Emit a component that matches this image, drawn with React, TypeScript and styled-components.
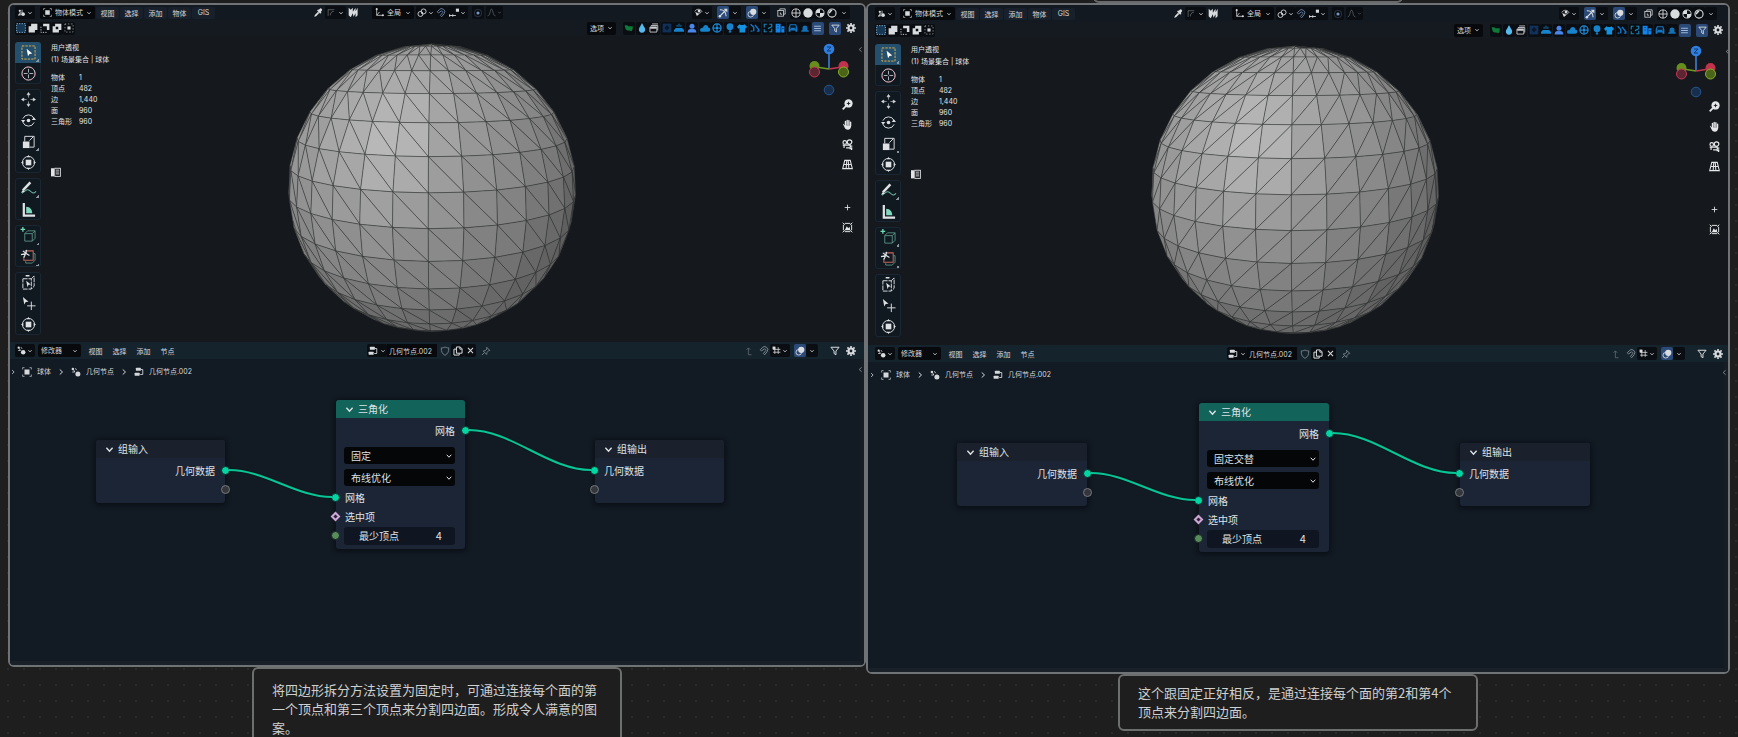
import React, { useMemo } from "react";
import styled, { createGlobalStyle, css } from "styled-components";

const GlobalStyle = createGlobalStyle`
  *, *::before, *::after { box-sizing: border-box; }
  html, body { margin: 0; background: #1e1e1e; }
  body, button, select, input {
    font-family: Inter, "Noto Sans CJK SC", sans-serif;
  }
  button, select, input {
    margin: 0; padding: 0; border: 0; background: none; color: inherit; font-size: inherit;
  }
  svg { display: block; flex: none; }
`;

/* ---------- icons (16 x 16 grid) ---------- */

const line = { fill: "none", stroke: "currentColor", strokeWidth: 1.4 } as const;

const glyphs: Record<string, React.ReactNode> = {
  chevron: <path d="M3.5 5.5 8 10.5l4.5-5" {...line} strokeWidth={2} />,
  next: <path d="M5.5 3 11 8l-5.500 5" {...line} strokeWidth={2} />,
  prev: <path d="M10.500 3 5 8l5.500 5" {...line} strokeWidth={2} />,
  editor3d: <><path d="M2 12h9M4 9h9M9 3v6M6 8l-3 6" {...line} /><circle cx="5" cy="5" r="2" fill="currentColor" /><circle cx="11" cy="11" r="3" fill="currentColor" /></>,
  object: <><rect x="4" y="4" width="8" height="8" fill="currentColor" /><path d="M1 4V1h3M12 1h3v3M15 12v3h-3M4 15H1v-3" {...line} opacity=".75" /></>,
  nodes: <><circle cx="11" cy="11" r="4" fill="currentColor" /><circle cx="3" cy="3" r="2" fill="currentColor" /><path d="M4 4l2 4M7 2l2 3M2 8h4" {...line} /></>,
  tree: <><rect x="3" y="1" width="8" height="5" rx="1" fill="currentColor" /><rect x="1" y="9" width="8" height="5" rx="1" fill="currentColor" /><path d="M11 4h3v8h-4" {...line} /></>,
  eyedropper: <><path d="M9 3l1.500-1.500a2 2 0 0 1 3.500 3L12.500 6l1 1-2 2-5-5 2-2z" fill="currentColor" /><path d="M8 6l-5 5-1 3 3-1 5-5" fill="currentColor" /></>,
  frame: <path d="M2 14V3h11M12 6c-4 0-6 3-6 7" {...line} opacity=".45" />,
  brandN: <path d="M1 1l3 3 3-3v6l4-6v5l3-5v11l-3 3V9l-3 5-1-5-3 6-3-3z" fill="currentColor" />,
  axes: <><path d="M3 1v12h12M3 13l5-6" {...line} /><circle cx="3" cy="2" r="1.800" fill="currentColor" /><circle cx="14" cy="13" r="1.800" fill="currentColor" /></>,
  pivot: <><circle cx="5.500" cy="9.500" r="4" {...line} /><circle cx="10.500" cy="5.500" r="4" {...line} /><circle cx="8" cy="8" r="1.300" fill="currentColor" /></>,
  magnet: <path d="M2 6l3-3a5 5 0 0 1 8 6l-4 5-2-2 4-5a2 2 0 0 0-3-2L4 8z" {...line} strokeWidth={1.600} />,
  snapInc: <><path d="M0 12h11M1 10v4M6 10v4" {...line} /><rect x="11" y="1" width="5" height="5" fill="currentColor" /></>,
  dot: <><circle cx="8" cy="8" r="2.500" fill="currentColor" /><circle cx="8" cy="8" r="6" {...line} opacity=".3" /></>,
  bell: <path d="M1 14c5 0 4-12 7-12s2 12 7 12" {...line} />,
  eye: <><path d="M1 6c4-5 10-5 13 0-3 4-6 4-8 3" {...line} /><circle cx="9" cy="5.500" r="2.500" fill="currentColor" /><path d="M2 6l7 5-4 3z" fill="currentColor" /></>,
  gizmo: <><path d="M2 14L13 3M3 3c6-1 10 4 10 10" {...line} strokeWidth={1.700} /><path d="M9 1h6v6z" fill="currentColor" /><circle cx="3" cy="13" r="2" fill="currentColor" /></>,
  overlay: <><circle cx="10" cy="6" r="5" fill="currentColor" /><circle cx="6" cy="10" r="4.500" {...line} /></>,
  xray: <><rect x="1.500" y="4.500" width="10" height="10" {...line} /><path d="M5 4V1.500h9.500V11H12M6 8v3h3" {...line} /></>,
  wire: <><circle cx="8" cy="8" r="6.500" {...line} /><path d="M8 1v14M1 8h14" {...line} /></>,
  solid: <circle cx="8" cy="8" r="7.500" fill="currentColor" />,
  material: <><circle cx="8" cy="8" r="6.500" {...line} /><path d="M8 8V1.500A6.500 6.500 0 0 0 1.500 8zM8 8h6.500A6.500 6.500 0 0 1 8 14.500z" fill="currentColor" /></>,
  rendered: <><circle cx="8" cy="8" r="6.500" {...line} strokeWidth={1.800} /><path d="M3 7a5 5 0 0 1 6-4L4 9z" fill="currentColor" /></>,
  leaf: <path d="M1 4c3 0 4-1 6 1h7v4l-2 4-4-1c-4 0-6-2-6-5z" fill="currentColor" />,
  drop: <path d="M8 0c2 5 5 7 5 10.500a5 5 0 0 1-10 0C3 7 6 5 8 0z" fill="currentColor" />,
  stack: <><path d="M1.500 6.500h11v8h-11zM3 4h11v8M5 1.500h9.500" {...line} /><path d="M2 6h10v3H2z" fill="currentColor" /></>,
  domain: <><rect x="1" y="1" width="14" height="14" fill="currentColor" opacity=".6" /><path d="M8 3l4 4-4 5-4-4z" fill="#0b1626" /></>,
  ocean: <><path d="M0 14v-3l3-3h10l3 3v3z" fill="currentColor" /><path d="M5 6V3M8 6V1M11 6V3" {...line} /></>,
  person: <><circle cx="8" cy="5" r="4" fill="currentColor" /><path d="M1 15c0-4 3-6 7-5 4-1 7 1 7 5z" fill="currentColor" /></>,
  cloud: <path d="M3 14a3 3 0 0 1 0-6l2-1c1-5 8-5 8 0a3.500 3.500 0 0 1 0 7z" fill="currentColor" />,
  reel: <><circle cx="8" cy="8" r="6.500" {...line} strokeWidth={2} /><path d="M8 2v4M8 10v4M2 8h4M10 8h4" {...line} strokeWidth={2} /><circle cx="8" cy="8" r="2" fill="currentColor" /></>,
  balloon: <><circle cx="8" cy="6" r="5.500" fill="currentColor" /><path d="M8 11v4M6 14h4" {...line} strokeWidth={2} /></>,
  shirt: <path d="M4 2l2 1h4l2-1 4 4-2 3-1-1v7H4V8L2 9 0 6z" fill="currentColor" />,
  bones: <path d="M1 2l5 5v6M8 3l7 9M1 13h3M11 13h4" {...line} strokeWidth={2.200} />,
  frameCut: <path d="M6 2H2v5M10 2h4v4l-6 3M2 10v4h4M14 9v5h-4" {...line} strokeWidth={1.800} />,
  building: <><path d="M1 1h8v14H1zM10 5h5v10h-5z" fill="currentColor" /><path d="M4 4h2M4 8h2M11 9h3" stroke="#0b1626" /></>,
  car: <><path d="M3 2h10l2 5v7h-3v-2H4v2H1V7z" fill="currentColor" /><path d="M4.500 4h7l1 3h-9zM3 9h2M11 9h2" fill="#0b1626" stroke="#0b1626" /></>,
  alarm: <path d="M2 14v-2l2-1V8a4 4 0 0 1 8 0v3l2 1v2z" fill="currentColor" />,
  list: <path d="M2 4h12M2 8h12M2 12h12" {...line} strokeWidth={1.700} />,
  filter: <path d="M1.500 2h13L9.500 8v6L6.500 12V8z" {...line} strokeWidth={1.600} />,
  gear: <><circle cx="8" cy="8" r="4" {...line} strokeWidth={3.500} /><path d="M8 0v3M8 13v3M0 8h3M13 8h3M2.300 2.300l2 2M11.700 11.700l2 2M13.700 2.300l-2 2M4.300 11.700l-2 2" {...line} strokeWidth={2.600} /></>,
  selBox: <><rect x="1" y="1" width="14" height="14" fill="#173854" /><rect x="1" y="1" width="14" height="14" {...line} stroke="#8fc4ec" strokeDasharray="2 2" /></>,
  selAdd: <path d="M5 1h10v10h-4v4H1V5h4z" fill="currentColor" />,
  selSub: <><path d="M5 1h10v10h-4V5H5z" fill="currentColor" /><path d="M1.500 6v9h9" {...line} strokeDasharray="2 2" /></>,
  selDiff: <><path d="M5 1h10v10h-4v4H1V5h4z" fill="currentColor" /><rect x="6" y="6" width="4" height="4" fill="#0a0d11" /></>,
  selAnd: <><rect x="1.500" y="1.500" width="13" height="13" {...line} strokeDasharray="2 3" opacity=".7" /><rect x="5.500" y="5.500" width="5" height="5" fill="currentColor" /></>,
  panel: <><rect x="0" y="2" width="5" height="13" fill="currentColor" /><rect x="6" y="2" width="9" height="13" {...line} /><path d="M8 5h5M8 8h5M8 11h5" {...line} /></>,
  shield: <path d="M8 1.500c2 1.500 4 1.500 6 1.500 0 6-1 9-6 12C3 12 2 9 2 3c2 0 4 0 6-1.500z" {...line} />,
  copy: <path d="M5.500 1.500h6l3 3v7h-9zM11 2v3h3M5 5H1.500v9.500H10V12" {...line} strokeWidth={1.600} />,
  close: <path d="M3.500 3.500l9 9M12.500 3.500l-9 9" {...line} strokeWidth={1.800} />,
  pin: <path d="M9 2l5 5-2 .5-2.500 3-.5 3-5.500-5.500 3-.5 3-2.500zM5.500 10.500L1.500 14.500" {...line} />,
  up: <path d="M12 14H7V3M4 6l3-3 3 3" {...line} />,
  grid: <><path d="M5 2v12M11 2v12M2 6h13M2 11h13" {...line} /><rect x="1" y="1" width="5" height="5" fill="currentColor" /></>,
  zoom: <><circle cx="9.500" cy="6.500" r="6" fill="currentColor" /><path d="M6 10l-5 5" {...line} strokeWidth={2.600} /><path d="M9.500 4v5M7 6.500h5" stroke="#15181c" strokeWidth="1.300" /></>,
  palm: <><path d="M5 9V3.500M7.500 8V2M10 8V2.500M12.500 9V4.500" {...line} strokeWidth={2} strokeLinecap="round" /><path d="M1 7c2 0 2 2 3 2h9.500c0 4-2 6.500-5 6.500C4 15.500 4 12 1 7z" fill="currentColor" /></>,
  camera: <><circle cx="4" cy="5" r="2.600" {...line} strokeWidth={1.700} /><circle cx="11" cy="4.500" r="3.300" {...line} strokeWidth={1.700} /><path d="M1 9h11v4H6M3 9v4M12 11l3-1M14 12v4M11 14h4" {...line} strokeWidth={1.700} /></>,
  persp: <path d="M4 2h8l3 12H1zM2.500 8h11M7 2L6 14M9 2l1 12" {...line} strokeWidth={1.500} />,
  plus: <path d="M8 3v10M3 8h10" {...line} strokeWidth={1.500} />,
  region: <><path d="M1 1l3 3M15 1l-3 3M1 15l3-3M15 15l-3-3M2 4v8M14 4v8M4 2h8M4 14h8" {...line} /><path d="M4 12l3-6 2 3 2-2 1 5z" fill="currentColor" /></>,
};

const toolGlyphs: Record<string, React.ReactNode> = {
  select: <><rect x="1" y="1" width="14" height="14" {...line} strokeWidth={1} stroke="#e3b04a" strokeDasharray="2.500 1.200" /><path d="M6 4l6 5-3 .5L7.500 12z" fill="#fff" /></>,
  cursor: <><circle cx="8" cy="8" r="7" {...line} strokeWidth={1} stroke="#efe4e8" /><circle cx="8" cy="8" r="7" {...line} strokeWidth={1} stroke="#b56a80" strokeDasharray="3 3" /><path d="M8 3v4M8 9v4M3 8h4M9 8h4" {...line} strokeWidth={.8} /></>,
  move: <path d="M8 3v3M8 10v3M3 8h3M10 8h3M8 .5l1.600 2.500H6.400zM8 15.500l1.600-2.500H6.400zM.5 8l2.500-1.600v3.200zM15.500 8l-2.500-1.600v3.200z" fill="currentColor" stroke="currentColor" strokeWidth=".6" />,
  rotate: <><path d="M2 6a6.500 6.500 0 0 1 12 0M14 10a6.500 6.500 0 0 1-12 0" {...line} strokeWidth={1} /><circle cx="8" cy="8" r="1.900" fill="currentColor" /><path d="M0 7.500h4.500L2.300 10.500zM16 7.500h-4.500l2.200-3z" fill="currentColor" /></>,
  scale: <><path d="M4 8V2.500h10V14H9" {...line} strokeWidth={1} /><path d="M9 7l4-4" {...line} strokeWidth={1} /><rect x="2" y="8" width="7" height="7" fill="currentColor" /></>,
  transform: <><circle cx="8" cy="8" r="6.500" {...line} strokeWidth={1} /><rect x="5" y="5" width="6" height="6" fill="currentColor" /><path d="M8 0l1.700 2.500H6.300zM8 16l1.700-2.500H6.300zM0 8l2.500-1.700v3.400zM16 8l-2.500-1.700v3.400z" fill="currentColor" /></>,
  annotate: <><path d="M2 10l8-8.500" {...line} strokeWidth={2.600} /><path d="M1 13c5-3 5-5 8-3 3 3 5 4 7 1" {...line} strokeWidth={1.100} stroke="#6db8a4" /><path d="M0 12.500l2-3 2 2z" fill="currentColor" /></>,
  measure: <><path d="M3 1v13.500h12" {...line} strokeWidth={2.400} /><path d="M5.500 5c4 0 6.500 3 6.500 7H5.500z" fill="#7fd8bd" /></>,
  cube: <><path d="M4 6h8v8H4zM4 6l3-3h8v8l-3 3M12 6l3-3" {...line} strokeWidth={.9} stroke="#5f9a8d" /><path d="M2 -1v5M-.5 1.500h5" {...line} stroke="#6fdcb4" /></>,
  box: <><path d="M4 2h9v10H3V8" {...line} stroke="#c2665f" strokeWidth={1.100} /><path d="M5 13v2h7l3-3V5h-2" {...line} strokeWidth={.9} stroke="#5f9a8d" /><path d="M2 2l4 3 3 2M0 6l5-1 1-4M5 5L3 9" {...line} strokeWidth={1.300} /></>,
  bbox: <><path d="M2 4h9v11H2zM11 4l3-3v11l-3 3" {...line} strokeWidth={1} strokeDasharray="5 1" /><path d="M5.500 6l5 4-2.500.500L7 13zM5 0h4v1.500H5z" fill="currentColor" /></>,
  pick: <><path d="M2 1l6 5-3 .5L3.500 9z" fill="currentColor" /><path d="M11 6v9M6.500 10.500h9" {...line} strokeWidth={1} /></>,
};

function Icon({ name, size = 9 }: { name: string; size?: number }) {
  return (
    <svg width={size} height={size} viewBox="0 0 16 16" overflow="visible" aria-hidden="true">
      {glyphs[name] ?? toolGlyphs[name]}
    </svg>
  );
}

/* ---------- board ---------- */

const Board = styled.main`
  display: grid;
  grid-template-columns: 858fr 864fr;
  height: 100vh;
  overflow: hidden;
  padding: 0 8px;
  align-items: start;
  background: #1e1e1e radial-gradient(circle at 1px 1px, #2b2b2b 1px, transparent 1px) 7px 12px / 16px 16px;
`;
const Column = styled.section`
  display: flex;
  flex-direction: column;
  align-items: center;
  min-width: 0;
`;
const TopSlot = styled.div`
  display: flex;
  align-self: stretch;
  align-items: flex-end;
  height: 3px;
  overflow: hidden;
`;
const CardEdge = styled.div`
  width: 310px;
  height: 12px;
  margin-left: 227px;
  border: 2px solid #67696a;
  border-radius: 6px;
`;
const Window = styled.article`
  align-self: stretch;
  border: 2px solid #707375;
  border-radius: 6px;
  overflow: hidden;
  background: #15181c;
  color: #d5d8db;
  font-size: 7px;
  line-height: 11px;
`;
const Note = styled.p<{ $width: number; $top: number }>`
  width: ${(p) => p.$width}px;
  margin: 0;
  padding: ${(p) => p.$top}px 20px 8px 18px;
  border: 2px solid #6d6e6e;
  border-radius: 6px;
  background: #1e1e1e;
  color: #cfcfcf;
  font-family: "Noto Sans CJK SC", sans-serif;
  font-size: 13px;
  line-height: 19px;
`;

/* ---------- bars ---------- */

type Insets = { $start: number; $end: number };

const Bar = styled.div<Insets & { $height: number; $tone?: string }>`
  display: flex;
  align-items: center;
  height: ${(p) => p.$height}px;
  padding: 0 ${(p) => p.$end}px 0 ${(p) => p.$start}px;
  background: ${(p) => p.$tone ?? "#131920"};
`;
const Cluster = styled.div<{ $gap?: number; $before?: number; $after?: number; $push?: boolean }>`
  display: flex;
  align-items: center;
  gap: ${(p) => p.$gap ?? 0}px;
  margin-left: ${(p) => (p.$push ? "auto" : `${p.$before ?? 0}px`)};
  margin-right: ${(p) => p.$after ?? 0}px;
`;
const AddonStrip = styled.div`
  display: flex;
  justify-content: space-between;
  width: 201px;
  margin-left: 7px;
`;
const Chip = styled.button<{ $width?: number; $tone?: "dark" | "active" | "none"; $dim?: boolean; $color?: string }>`
  display: flex;
  align-items: center;
  justify-content: space-evenly;
  width: ${(p) => p.$width ?? 12}px;
  height: 13px;
  border-radius: 2px;
  color: ${(p) => p.$color ?? (p.$dim ? "#5b636b" : "#d9dcdf")};
  background: ${(p) => (p.$tone === "active" ? "#2b4a78" : p.$tone === "none" ? "transparent" : "#0a0d11")};
`;
const Menu = styled.button<{ $flat?: boolean }>`
  width: 23px;
  height: 12px;
  border-radius: 2px;
  white-space: nowrap;
  background: ${(p) => (p.$flat ? "transparent" : "#18212b")};
`;
const Picker = styled.label<{ $width: number }>`
  display: flex;
  align-items: center;
  width: ${(p) => p.$width}px;
  height: 13px;
  padding: 0 3px;
  gap: 3px;
  border-radius: 2px;
  background: #07090c;
`;
const BareSelect = styled.select`
  flex: 1;
  min-width: 0;
  appearance: none;
  outline: 0;
`;
const NameInput = styled.input`
  width: 50px;
  height: 13px;
  padding: 0 2px;
  background: #07090c;
`;

/* ---------- viewport ---------- */

const Viewport = styled.div<{ $height: number; $end: number }>`
  display: grid;
  grid-template-columns: 1fr 290px 1fr;
  height: ${(p) => p.$height}px;
  padding-right: ${(p) => p.$end}px;
  background: #15181c;
`;
const LeftSide = styled.div<{ $start: number }>`
  display: flex;
  gap: 10px;
  padding: 6px 0 0 ${(p) => p.$start}px;
`;
const Tools = styled.div`
  display: flex;
  flex-direction: column;
  gap: 5px;
`;
const ToolGroup = styled.div`
  display: flex;
  flex-direction: column;
  width: 26px;
  border-radius: 3px;
  overflow: hidden;
  background: #101820;
  box-shadow: inset 0 0 0 1px #1a2732;
`;
const Tool = styled.button<{ $active?: boolean; $more?: boolean }>`
  display: flex;
  align-items: center;
  justify-content: center;
  height: 21px;
  color: #dfe2e5;
  ${(p) => p.$active && css`background-color: #24506e;`}
  ${(p) => p.$more && css`
    background-image: linear-gradient(135deg, transparent 50%, #8b959d 50%);
    background-size: 3px 3px;
    background-repeat: no-repeat;
    background-position: right 2px bottom 1px;
  `}
`;
const Stats = styled.div`
  display: flex;
  flex-direction: column;
  align-items: flex-start;
  color: #e2e4e6;
  line-height: 12px;
  white-space: nowrap;
`;
const StatsTable = styled.table`
  margin: 6px 0 40px;
  border-spacing: 0;
  line-height: 11px;
  th { width: 28px; padding: 0; font-weight: 400; text-align: left; }
  td { padding: 0; }
`;
const SphereCell = styled.div`
  padding-top: 7px;
`;
const RightSide = styled.div<{ $shift: number }>`
  display: flex;
  flex-direction: column;
  align-items: flex-end;
  padding-top: 6px;
  margin-right: ${(p) => p.$shift}px;
`;
const GizmoRow = styled.div`
  display: flex;
  gap: 8px;
  height: 52px;
  color: #8b9095;
`;
const Edge = styled.button`
  height: 14px;
`;
const NavButton = styled.button<{ $gapBefore?: boolean }>`
  display: flex;
  align-items: center;
  justify-content: center;
  width: 20px;
  height: 20px;
  margin: ${(p) => (p.$gapBefore ? 23 : 0)}px 7px 0 0;
  color: #e4e6e8;
`;

/* ---------- node editor ---------- */

const Crumbs = styled.nav<{ $start: number }>`
  display: flex;
  align-items: center;
  height: 25px;
  padding-left: ${(p) => p.$start}px;
  gap: 6px;
  a { color: inherit; text-decoration: none; display: flex; align-items: center; gap: 5px; }
`;
const Canvas = styled.div<{ $height: number }>`
  position: relative;
  height: ${(p) => p.$height}px;
  background: #121a23;
  border-right: 4px solid #171d24;
  border-bottom: 4px solid #1a2028;
`;
const CanvasEdge = styled.button`
  position: absolute;
  right: -4px;
  top: 7px;
  color: #8b9095;
`;
const Links = styled.svg`
  position: absolute;
  inset: 0;
  width: 100%;
  height: 100%;
  pointer-events: none;
`;
const NodeBox = styled.section<{ $x: number; $y: number; $width: number }>`
  position: absolute;
  left: ${(p) => p.$x}px;
  top: ${(p) => p.$y}px;
  width: ${(p) => p.$width}px;
  padding-bottom: 4px;
  border-radius: 3px;
  background: #1b2535;
  box-shadow: 0 1px 5px 1px #090e14;
  color: #dfe2e6;
  font-size: 10px;
  line-height: 14px;
`;
const NodeHeader = styled.header<{ $accent?: boolean }>`
  display: flex;
  align-items: center;
  gap: 3px;
  height: 18px;
  margin-bottom: 3px;
  padding-left: 8px;
  border-radius: 3px 3px 0 0;
  background: ${(p) => (p.$accent ? "#12645a" : "#1a212c")};
`;
const Row = styled.div<{ $right?: boolean }>`
  position: relative;
  display: flex;
  align-items: center;
  justify-content: ${(p) => (p.$right ? "flex-end" : "flex-start")};
  height: 19px;
  padding: 0 10px 0 9px;
`;
const Socket = styled.span<{ $side: "left" | "right"; $kind?: "geo" | "empty" | "bool" | "int" }>`
  position: absolute;
  top: 5px;
  ${(p) => p.$side}: -5px;
  width: 9px;
  height: 9px;
  border-radius: 50%;
  border: 1px solid #0d2a2a;
  background: #00d6a3;
  ${(p) => p.$kind === "empty" && css`background: #33373c; border-color: #767a7e;`}
  ${(p) => p.$kind === "int" && css`background: #598c5c; border-color: #17261f;`}
  ${(p) => p.$kind === "bool" && css`
    width: 7px; height: 7px; top: 6px; left: -4px;
    border: 2px solid #cca6d6; border-radius: 0; background: #2a2233; transform: rotate(45deg);
  `}
`;
const SelectGroup = styled.div`
  display: flex;
  flex-direction: column;
  gap: 5px;
  margin: 7px 10px 2px 8px;
`;
const NodeSelect = styled.label`
  display: flex;
  align-items: center;
  height: 17px;
  padding: 0 2px 0 7px;
  border-radius: 3px;
  background: #040608;
`;
const NumberField = styled.label`
  display: flex;
  flex: 1;
  align-items: center;
  justify-content: space-between;
  height: 18px;
  margin-left: -1px;
  padding: 0 13px 0 15px;
  border-radius: 3px;
  background: #0f1622;
  input { width: 20px; text-align: right; outline: 0; }
`;

/* ---------- mesh ---------- */

const SEGMENTS = 32;
const RINGS = 16;
const CAMERA = 4;
const TILT = (12.75 * Math.PI) / 180;
const TURN = (-1.2 * Math.PI) / 180;
const RADIUS = 144;

type Vec = [number, number, number];

function vertex(ring: number, seg: number): Vec {
  const lat = Math.PI / 2 - (ring * Math.PI) / RINGS;
  const lon = (seg * 2 * Math.PI) / SEGMENTS + TURN;
  const x = Math.cos(lat) * Math.sin(lon);
  const z = Math.cos(lat) * Math.cos(lon);
  const y = Math.sin(lat);
  return [
    x,
    y * Math.cos(TILT) - z * Math.sin(TILT),
    z * Math.cos(TILT) + y * Math.sin(TILT),
  ];
}

function project([x, y, z]: Vec): string {
  const k = (RADIUS * Math.sqrt(CAMERA * CAMERA - 1)) / (CAMERA - z);
  return `${(145 + x * k).toFixed(1)},${(145 - y * k).toFixed(1)}`;
}

function tone(points: Vec[], seg: number): string {
  const n = [0, 1, 2].map((i) => points.reduce((s, p) => s + p[i], 0) / points.length);
  const len = Math.hypot(n[0], n[1], n[2]);
  const [x, y, z] = n.map((v) => v / len);
  const key = Math.max(0, x * -0.3 + y * 0.55 + z * 0.78);
  const glow = Math.pow(Math.max(0, x * -0.2 + y * 0.25 + z * 0.95), 14);
  const v = 105 + 58 * key + glow * (x < 0 ? 22 : 10) - Math.max(0, x) * 12 + (seg % 2 ? 0 : 2);
  const g = Math.round(v);
  return `rgb(${g},${g},${g})`;
}

function Sphere({ alternate }: { alternate: boolean }) {
  const faces = useMemo(() => {
    const out: { points: string; fill: string }[] = [];
    for (let r = 0; r < RINGS; r++) {
      for (let s = 0; s < SEGMENTS; s++) {
        const a = vertex(r, s);
        const b = vertex(r, s + 1);
        const c = vertex(r + 1, s + 1);
        const d = vertex(r + 1, s);
        const fill = tone([a, b, c, d], s);
        const tris =
          r === 0 ? [[a, c, d]] : r === RINGS - 1 ? [[a, b, c]] : alternate ? [[a, b, d], [b, c, d]] : [[a, b, c], [a, c, d]];
        for (const t of tris) {
          const depth = (t[0][2] + t[1][2] + t[2][2]) / 3;
          if (depth > 1 / CAMERA - 0.03) out.push({ points: t.map((p) => project(p as Vec)).join(" "), fill });
        }
      }
    }
    return out;
  }, [alternate]);
  return (
    <svg width="290" height="290" viewBox="0 0 290 290" role="img" aria-label="球体">
      {faces.map((f, i) => (
        <polygon key={i} points={f.points} fill={f.fill} stroke="#2c2d2e" strokeOpacity=".7" strokeWidth=".6" strokeLinejoin="round" />
      ))}
    </svg>
  );
}

function AxisGizmo() {
  return (
    <svg width="40" height="54" viewBox="0 0 40 54" aria-hidden="true">
      <path d="M20 27V10" stroke="#3c86dc" strokeWidth="1.500" />
      <path d="M20 27l-13-2" stroke="#6d9c22" strokeWidth="1.500" />
      <path d="M20 27l13-2" stroke="#c8354f" strokeWidth="1.500" />
      <circle cx="20" cy="7" r="5.300" fill="#2f7fe0" />
      <path d="M18 5h4l-4 4h4" fill="none" stroke="#133a6c" />
      <circle cx="5.500" cy="24" r="5" fill="#678f1c" />
      <circle cx="34.500" cy="24" r="5" fill="#c2324c" />
      <circle cx="5.500" cy="30" r="5" fill="#5b2632" stroke="#c83a55" />
      <circle cx="34.500" cy="30" r="5" fill="#4b6418" stroke="#84b02a" />
      <circle cx="20" cy="48" r="4.800" fill="#172e4d" stroke="#28568f" />
    </svg>
  );
}

/* ---------- window ---------- */

type Config = {
  method: string;
  alternate: boolean;
  start: number;
  end: number;
  bar: number;
  viewport: number;
  header: number;
  canvas: number;
  nodeWidth: number;
  nodeX: [number, number, number];
};

const toolGroups = [
  ["select", "cursor"],
  ["move", "rotate", "scale", "transform"],
  ["annotate", "measure"],
  ["cube", "box"],
  ["bbox", "pick", "transform"],
];
const withMore = ["select", "scale", "annotate", "cube", "box"];

const addons: [string, string][] = [
  ["leaf", "#0d7a3a"], ["drop", "#55b9ee"], ["stack", "#c9ccd0"], ["domain", "#15498c"], ["ocean", "#1683cc"],
  ["person", "#4a86ea"], ["cloud", "#1683cc"], ["reel", "#1e8fe0"], ["balloon", "#1683cc"], ["shirt", "#1292e0"],
  ["bones", "#1477cc"], ["frameCut", "#1683b8"], ["building", "#1284ea"], ["car", "#1478c4"], ["alarm", "#1270b4"],
];

const stats = [["物体", "1"], ["顶点", "482"], ["边", "1,440"], ["面", "960"], ["三角形", "960"]];

function NodeTitle({ children, accent }: { children: string; accent?: boolean }) {
  return (
    <NodeHeader $accent={accent}>
      <Icon name="chevron" size={11} />
      {children}
    </NodeHeader>
  );
}

function curve(x1: number, y1: number, x2: number, y2: number) {
  const k = (x2 - x1) * 0.35;
  return `M${x1} ${y1}C${x1 + k} ${y1} ${x2 - k} ${y2} ${x2} ${y2}`;
}

function BlenderWindow({ c }: { c: Config }) {
  const insets = { $start: c.start, $end: c.end };
  const [inX, triX, outX] = c.nodeX;
  const reach = c.nodeWidth + 4;
  const paths = [curve(inX + reach, 111, triX - 4, 138), curve(triX + reach, 71, outX - 4, 111)];
  return (
    <Window>
      <Bar {...insets} $height={c.bar}>
        <Cluster $gap={1}>
          <Chip $width={20} aria-label="编辑器类型"><Icon name="editor3d" /><Icon name="chevron" size={6} /></Chip>
          <Cluster $before={4}>
            <Picker $width={55}>
              <Icon name="object" />
              <BareSelect aria-label="模式" defaultValue="物体模式"><option>物体模式</option></BareSelect>
              <Icon name="chevron" size={6} />
            </Picker>
          </Cluster>
          <Cluster $gap={1}>
            {["视图", "选择", "添加", "物体", "GIS"].map((m) => <Menu key={m}>{m}</Menu>)}
          </Cluster>
        </Cluster>
        <Cluster $before={96}>
          <Chip $tone="none" $width={14} aria-label="吸管"><Icon name="eyedropper" size={10} /></Chip>
          <Chip $width={21} aria-label="边框"><Icon name="frame" /><Icon name="chevron" size={6} /></Chip>
          <Chip $tone="none" $width={14} aria-label="扩展"><Icon name="brandN" size={11} /></Chip>
          <Cluster $before={12}>
            <Picker $width={42}>
              <Icon name="axes" />
              <BareSelect aria-label="坐标系" defaultValue="全局"><option>全局</option></BareSelect>
              <Icon name="chevron" size={6} />
            </Picker>
          </Cluster>
          <Cluster $before={2} $gap={4}>
            <Cluster>
              <Chip $width={19} aria-label="轴心点"><Icon name="pivot" size={10} /><Icon name="chevron" size={6} /></Chip>
              <Chip $color="#62799c" aria-label="吸附"><Icon name="magnet" size={10} /></Chip>
              <Chip $width={21} aria-label="吸附到"><Icon name="snapInc" size={10} /><Icon name="chevron" size={6} /></Chip>
            </Cluster>
            <Cluster $gap={2}>
              <Chip $color="#7694c4" aria-label="衰减编辑"><Icon name="dot" size={10} /></Chip>
              <Chip $width={17} $dim aria-label="衰减"><Icon name="bell" /><Icon name="chevron" size={5} /></Chip>
            </Cluster>
          </Cluster>
        </Cluster>
        <Cluster $push $gap={5} $after={7}>
          <Chip $width={20} aria-label="可见性"><Icon name="eye" /><Icon name="chevron" size={6} /></Chip>
          <Cluster>
            <Chip $tone="active" aria-label="操纵器"><Icon name="gizmo" size={10} /></Chip>
            <Chip aria-label="操纵器选项"><Icon name="chevron" size={6} /></Chip>
          </Cluster>
          <Cluster>
            <Chip $tone="active" aria-label="叠加层"><Icon name="overlay" size={10} /></Chip>
            <Chip aria-label="叠加层选项"><Icon name="chevron" size={6} /></Chip>
          </Cluster>
          <Cluster>
            <Chip $tone="none" aria-label="透视模式"><Icon name="xray" /></Chip>
            <Cluster $before={3}>
              {["wire", "solid", "material", "rendered"].map((n) => (
                <Chip key={n} aria-label={n}><Icon name={n} size={10} /></Chip>
              ))}
              <Chip aria-label="着色选项"><Icon name="chevron" size={6} /></Chip>
            </Cluster>
          </Cluster>
        </Cluster>
      </Bar>
      <Bar {...insets} $height={16} $tone="#141a20">
        <Cluster>
          {["selBox", "selAdd", "selSub", "selDiff", "selAnd"].map((n) => (
            <Chip key={n} aria-label={n}><Icon name={n} size={10} /></Chip>
          ))}
        </Cluster>
        <Cluster $push>
          <Picker $width={29}>
            <BareSelect aria-label="选项" defaultValue="选项"><option>选项</option></BareSelect>
            <Icon name="chevron" size={6} />
          </Picker>
          <AddonStrip>
            {addons.map(([n, color]) => (
              <Chip key={n} $color={color} aria-label={n}><Icon name={n} size={10} /></Chip>
            ))}
            <Chip $tone="active" $color="#a7bedd" aria-label="列表"><Icon name="list" /></Chip>
          </AddonStrip>
          <Cluster $before={5} $gap={4}>
            <Chip $tone="active" aria-label="过滤"><Icon name="filter" /></Chip>
            <Chip $tone="none" aria-label="设置"><Icon name="gear" size={10} /></Chip>
          </Cluster>
        </Cluster>
      </Bar>
      <Viewport $height={c.viewport} $end={c.end + 3}>
        <LeftSide $start={c.start}>
          <Tools>
            {toolGroups.map((group, g) => (
              <ToolGroup key={g}>
                {group.map((t) => (
                  <Tool key={t} $active={t === "select"} $more={withMore.includes(t)} aria-label={t}>
                    <Icon name={t} size={15} />
                  </Tool>
                ))}
              </ToolGroup>
            ))}
          </Tools>
          <Stats>
            <span>用户透视</span>
            <span>(1) 场景集合 | 球体</span>
            <StatsTable>
              <tbody>
                {stats.map(([k, v]) => <tr key={k}><th scope="row">{k}</th><td>{v}</td></tr>)}
              </tbody>
            </StatsTable>
            <Icon name="panel" size={10} />
          </Stats>
        </LeftSide>
        <SphereCell><Sphere alternate={c.alternate} /></SphereCell>
        <RightSide $shift={-10}>
          <GizmoRow>
            <AxisGizmo />
            <Edge aria-label="展开侧栏"><Icon name="prev" size={7} /></Edge>
          </GizmoRow>
          {["zoom", "palm", "camera", "persp"].map((n) => (
            <NavButton key={n} aria-label={n}><Icon name={n} size={11} /></NavButton>
          ))}
          <NavButton $gapBefore aria-label="plus"><Icon name="plus" /></NavButton>
          <NavButton aria-label="region"><Icon name="region" size={11} /></NavButton>
        </RightSide>
      </Viewport>
      <Bar {...insets} $height={c.header} $tone="#15232d">
        <Cluster $gap={3}>
          <Chip $width={20} aria-label="编辑器类型"><Icon name="nodes" /><Icon name="chevron" size={6} /></Chip>
          <Picker $width={43}>
            <BareSelect aria-label="节点类型" defaultValue="修改器"><option>修改器</option></BareSelect>
            <Icon name="chevron" size={6} />
          </Picker>
          <Cluster $gap={1}>
            {["视图", "选择", "添加", "节点"].map((m) => <Menu key={m} $flat>{m}</Menu>)}
          </Cluster>
        </Cluster>
        <Cluster $before={188}>
          <Chip $width={20} aria-label="节点树"><Icon name="tree" size={10} /><Icon name="chevron" size={6} /></Chip>
          <NameInput aria-label="名称" defaultValue="几何节点.002" />
          <Cluster $before={1}>
            <Chip $width={13} $tone="none" $color="#7d868e" aria-label="伪用户"><Icon name="shield" size={10} /></Chip>
            <Chip $width={13} aria-label="复制"><Icon name="copy" size={10} /></Chip>
            <Chip aria-label="断开"><Icon name="close" /></Chip>
          </Cluster>
          <Cluster $before={4}>
            <Chip $tone="none" $color="#7d868e" aria-label="固定"><Icon name="pin" size={10} /></Chip>
          </Cluster>
        </Cluster>
        <Cluster $push>
          <Chip $tone="none" $dim aria-label="上级"><Icon name="up" size={10} /></Chip>
          <Cluster $before={3}>
            <Chip $tone="none" $color="#7d868e" aria-label="吸附"><Icon name="magnet" size={10} /></Chip>
            <Chip $width={20} aria-label="吸附到"><Icon name="grid" /><Icon name="chevron" size={6} /></Chip>
          </Cluster>
          <Cluster $before={4}>
            <Chip $tone="active" aria-label="叠加层"><Icon name="overlay" size={10} /></Chip>
            <Chip aria-label="叠加层选项"><Icon name="chevron" size={6} /></Chip>
          </Cluster>
          <Cluster $before={11} $gap={4}>
            <Chip $tone="none" aria-label="过滤"><Icon name="filter" size={10} /></Chip>
            <Chip $tone="none" aria-label="设置"><Icon name="gear" size={10} /></Chip>
          </Cluster>
        </Cluster>
      </Bar>
      <Canvas $height={c.canvas}>
        <Crumbs $start={c.start - 6}>
          <Icon name="next" size={6} />
          <a href="#object"><Icon name="object" size={10} />球体</a>
          <Icon name="next" size={8} />
          <a href="#modifier"><Icon name="nodes" size={10} />几何节点</a>
          <Icon name="next" size={8} />
          <a href="#tree"><Icon name="tree" size={10} />几何节点.002</a>
        </Crumbs>
        <CanvasEdge aria-label="展开侧栏"><Icon name="prev" size={7} /></CanvasEdge>
        <NodeBox $x={inX} $y={81} $width={c.nodeWidth}>
          <NodeTitle>组输入</NodeTitle>
          <Row $right>几何数据<Socket $side="right" /></Row>
          <Row><Socket $side="right" $kind="empty" /></Row>
        </NodeBox>
        <NodeBox $x={triX} $y={41} $width={c.nodeWidth}>
          <NodeTitle accent>三角化</NodeTitle>
          <Row $right>网格<Socket $side="right" /></Row>
          <SelectGroup>
            {[["四边形方法", c.method], ["多边形方法", "布线优化"]].map(([label, value]) => (
              <NodeSelect key={label}>
                <BareSelect aria-label={label} defaultValue={value}><option>{value}</option></BareSelect>
                <Icon name="chevron" size={8} />
              </NodeSelect>
            ))}
          </SelectGroup>
          <Row>网格<Socket $side="left" /></Row>
          <Row>选中项<Socket $side="left" $kind="bool" /></Row>
          <Row>
            <NumberField>最少顶点<input defaultValue="4" inputMode="numeric" /></NumberField>
            <Socket $side="left" $kind="int" />
          </Row>
        </NodeBox>
        <NodeBox $x={outX} $y={81} $width={c.nodeWidth}>
          <NodeTitle>组输出</NodeTitle>
          <Row>几何数据<Socket $side="left" /></Row>
          <Row><Socket $side="left" $kind="empty" /></Row>
        </NodeBox>
        <Links>
          {paths.map((d) => (
            <g key={d} fill="none">
              <path d={d} stroke="#0a1a1c" strokeWidth="4" />
              <path d={d} stroke="#08c496" strokeWidth="2" />
            </g>
          ))}
        </Links>
      </Canvas>
    </Window>
  );
}

const fixed: Config = {
  method: "固定", alternate: false, start: 5, end: 7, bar: 15,
  viewport: 306, header: 17, canvas: 306, nodeWidth: 129, nodeX: [86, 326, 585],
};
const fixedAlternate: Config = {
  method: "固定交替", alternate: true, start: 7, end: 4, bar: 17,
  viewport: 307, header: 17, canvas: 310, nodeWidth: 130, nodeX: [89, 331, 592],
};

export default function App() {
  return (
    <>
      <GlobalStyle />
      <Board>
        <Column>
          <TopSlot />
          <BlenderWindow c={fixed} />
          <Note $width={370} $top={11}>
            将四边形拆分方法设置为固定时，可通过连接每个面的第一个顶点和第三个顶点来分割四边面。形成令人满意的图案。
          </Note>
        </Column>
        <Column>
          <TopSlot><CardEdge /></TopSlot>
          <BlenderWindow c={fixedAlternate} />
          <Note $width={360} $top={7}>
            这个跟固定正好相反，是通过连接每个面的第2和第4个顶点来分割四边面。
          </Note>
        </Column>
      </Board>
    </>
  );
}
